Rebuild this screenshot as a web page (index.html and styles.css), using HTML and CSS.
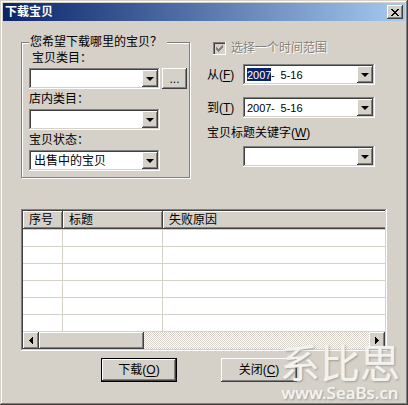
FILE: index.html
```html
<!DOCTYPE html>
<html lang="zh-CN">
<head>
<meta charset="utf-8">
<title>下载宝贝</title>
<link rel="stylesheet" href="styles.css">
</head>
<body>
<main class="window">
  <header class="titlebar">
    <h1>下载宝贝</h1>
    <button class="close" type="button" aria-label="关闭"><svg width="8" height="7" viewBox="0 0 8 7" shape-rendering="crispEdges"><path d="M0 0h2v1h1v1h2V1h1V0h2v1H7v1H6v1H5v1h1v1h1v1h1v1H6V6H5V5H3v1H2v1H0V6h1V5h1V4h1V3H2V2H1V1H0z"/></svg></button>
  </header>
  <form class="content">
    <div class="filters">
      <fieldset class="group">
        <legend>您希望下载哪里的宝贝？</legend>
        <label class="indent" for="cat">宝贝类目：</label>
        <div class="row">
          <div class="combo"><select id="cat"><option></option></select><span class="arrow"></span></div>
          <button class="browse" type="button">...</button>
        </div>
        <label for="shop">店内类目：</label>
        <div class="row">
          <div class="combo"><select id="shop"><option></option></select><span class="arrow"></span></div>
          <span class="spacer"></span>
        </div>
        <label for="state">宝贝状态：</label>
        <div class="row">
          <div class="combo"><select id="state"><option>出售中的宝贝</option></select><span class="arrow"></span></div>
          <span class="spacer"></span>
        </div>
      </fieldset>
      <div class="range">
        <label class="check"><input type="checkbox" checked disabled><svg class="tick" width="7" height="7" viewBox="0 0 7 7" shape-rendering="crispEdges"><path d="M0 2h1v1h1v1h1V3h1V2h1V1h1V0h1v3H6v1H5v1H4v1H3v1H2V6H1V5H0z"/></svg><span>选择一个时间范围</span></label>
        <div class="field">
          <label for="from-year">从(<u>F</u>)</label>
          <div class="combo date">
            <input id="from-year" class="year selected" value="2007"><span>-</span><input class="month" value="5" aria-label="月"><span>-</span><input class="day" value="16" aria-label="日">
            <button class="arrow" type="button" aria-label="选择日期"></button>
          </div>
        </div>
        <div class="field">
          <label for="to-year">到(<u>T</u>)</label>
          <div class="combo date">
            <input id="to-year" class="year" value="2007"><span>-</span><input class="month" value="5" aria-label="月"><span>-</span><input class="day" value="16" aria-label="日">
            <button class="arrow" type="button" aria-label="选择日期"></button>
          </div>
        </div>
        <label class="keyword" for="kw">宝贝标题关键字(<u>W</u>)</label>
        <div class="field">
          <span></span>
          <div class="combo"><select id="kw"><option></option></select><span class="arrow"></span></div>
        </div>
      </div>
    </div>
    <div class="list">
      <table>
        <colgroup><col class="c-no"><col class="c-title"><col></colgroup>
        <thead><tr><th>序号</th><th>标题</th><th>失败原因</th></tr></thead>
        <tbody>
          <tr class="first"><td></td><td></td><td></td></tr>
          <tr><td></td><td></td><td></td></tr>
          <tr><td></td><td></td><td></td></tr>
          <tr><td></td><td></td><td></td></tr>
          <tr><td></td><td></td><td></td></tr>
          <tr><td></td><td></td><td></td></tr>
        </tbody>
      </table>
      <div class="scrollbar">
        <button type="button" aria-label="向左滚动"><svg width="4" height="7" viewBox="0 0 4 7" shape-rendering="crispEdges"><path d="M4 0v7H3V6H2V5H1V4H0V3h1V2h1V1h1V0z"/></svg></button>
        <span class="thumb"></span>
        <span class="track"></span>
        <button type="button" aria-label="向右滚动"><svg width="4" height="7" viewBox="0 0 4 7" shape-rendering="crispEdges"><path d="M0 0v7h1V6h1V5h1V4h1V3H3V2H2V1H1V0z"/></svg></button>
      </div>
    </div>
    <div class="actions">
      <button class="default" type="submit">下载(<u>O</u>)</button>
      <button type="button">关闭(<u>C</u>)</button>
    </div>
  </form>
  <div class="watermark"><span class="mark-name">系比思</span><span class="mark-url">www.SeaBs.cn</span></div>
</main>
</body>
</html>
```
FILE: styles.css
```css
* { box-sizing: border-box; }

body {
  margin: 0;
  background: #d5d1c9;
  color: #000;
  font: 12px/14px "Liberation Sans", "Noto Sans CJK SC", sans-serif;
}

button, input, select {
  margin: 0;
  padding: 0;
  border: 0;
  border-radius: 0;
  font: inherit;
  color: inherit;
  background: #d5d1c9;
}

u { text-underline-offset: 2px; }

.window {
  position: relative;
  min-height: 100vh;
  padding: 3px;
  box-shadow: inset -1px -1px #404040, inset 1px 1px #d5d1c9,
    inset -2px -2px #808080, inset 2px 2px #fff;
}

.titlebar {
  display: flex;
  align-items: center;
  justify-content: space-between;
  height: 18px;
  padding: 0 2px;
  background: linear-gradient(to right, #0a246a, #a6caf0);
}

.titlebar h1 {
  margin: 0;
  color: #fff;
  font-size: 12px;
  line-height: 18px;
}

button, .thumb, .arrow {
  display: flex;
  align-items: center;
  justify-content: center;
  background: #d5d1c9;
  box-shadow: inset -1px -1px #404040, inset 1px 1px #fff,
    inset -2px -2px #808080;
}

.close { width: 16px; height: 14px; }

.content { padding: 14px 18px 20px; }

.filters {
  display: grid;
  grid-template-columns: 169fr 168fr;
  gap: 17px;
  padding-right: 12px;
}

.group {
  min-width: 0;
  margin: 0;
  padding: 2px 2px 6px 7px;
  border: 1px solid #808080;
  box-shadow: 1px 1px #fff, inset 1px 1px #fff;
}

.group legend {
  padding: 0 5px 0 1px;
  background: #d5d1c9;
}

.group label { display: block; }
.group .indent { padding-left: 3px; }

.row {
  display: flex;
  gap: 2px;
  margin: 3px 0;
}

.group .row:last-child { margin-bottom: 0; }

.combo {
  display: flex;
  flex: 1;
  min-width: 0;
  height: 21px;
  padding: 2px;
  background: #fff;
  box-shadow: inset -1px -1px #fff, inset 1px 1px #808080,
    inset -2px -2px #d5d1c9, inset 2px 2px #404040;
}

.combo select {
  flex: 1;
  min-width: 0;
  padding-left: 3px;
  appearance: none;
  background: #fff;
}

.arrow { width: 16px; pointer-events: none; }

.arrow::before {
  content: "";
  border: solid transparent;
  border-width: 4px 4px 0;
  border-top-color: #000;
}

.browse, .spacer { width: 25px; }

.range { padding-top: 6px; }

.check {
  display: flex;
  align-items: center;
  position: relative;
  gap: 5px;
  height: 14px;
  margin: 0 0 9px 6px;
  color: #85827c;
  text-shadow: 1px 1px #fff;
}

.check input {
  width: 13px;
  height: 13px;
  appearance: none;
  box-shadow: inset -1px -1px #fff, inset 1px 1px #808080,
    inset 2px 2px #404040;
}

.tick {
  position: absolute;
  left: 3px;
  top: 4px;
  fill: #808080;
}

.field {
  display: grid;
  grid-template-columns: 36px 1fr;
  align-items: center;
  margin-bottom: 12px;
}

.keyword {
  display: block;
  margin: -4px 0 6px;
}

.field:last-child { margin-bottom: 0; }

.date {
  align-items: center;
  padding-left: 4px;
  font-size: 11px;
}

.date input {
  height: 13px;
  background: none;
}

.date .year { width: 24px; }
.date .month { width: 12px; text-align: right; }
.date .day { width: 14px; }
.date .selected { background: #0a246a; color: #fff; }
.date .arrow { height: 17px; margin-left: auto; pointer-events: auto; }

.list {
  margin-top: 31px;
  padding: 2px;
  background: #fff;
  box-shadow: inset -1px -1px #fff, inset 1px 1px #808080,
    inset -2px -2px #d5d1c9, inset 2px 2px #404040;
}

.list table {
  width: 100%;
  table-layout: fixed;
  border-collapse: separate;
  border-spacing: 0;
}

.c-no { width: 40px; }
.c-title { width: 100px; }

.list th {
  height: 18px;
  padding: 0 6px;
  background: #d5d1c9;
  box-shadow: inset -1px -1px #404040, inset 1px 1px #fff,
    inset -2px -2px #808080;
  font-weight: normal;
  text-align: left;
}

.list th:last-child {
  box-shadow: inset 0 -1px #404040, inset 1px 1px #fff,
    inset 0 -2px #808080;
}

.list td {
  height: 17px;
  padding: 0;
  border-right: 1px solid #d5d1c9;
  border-bottom: 1px solid #d5d1c9;
}

.list td:last-child { border-right: 0; }

.first td { border-top: 1px solid #d5d1c9; height: 18px; }

.scrollbar { display: flex; height: 17px; }
.scrollbar button { width: 16px; }
.thumb { width: 105px; }

.track {
  flex: 1;
  background: repeating-conic-gradient(#fff 0 25%, #d5d1c9 0 50%) 0 0 / 2px 2px;
}

.actions {
  display: flex;
  justify-content: center;
  gap: 44px;
  margin-top: 7px;
  padding-right: 10px;
}

.actions button { width: 76px; height: 24px; }

.actions .default {
  border: 1px solid #000;
}

.watermark {
  position: absolute;
  right: 8px;
  bottom: 4px;
  display: flex;
  flex-direction: column;
  align-items: center;
  color: rgba(244, 243, 240, 0.95);
  text-shadow: 0 0 1px rgba(244, 243, 240, 0.9), 1px 1px 2px rgba(110, 108, 104, 0.6);
  pointer-events: none;
}

.mark-name {
  font-size: 40px;
  line-height: 40px;
}

.mark-url {
  font: 500 17px/17px "Noto Sans", sans-serif;
}
```
